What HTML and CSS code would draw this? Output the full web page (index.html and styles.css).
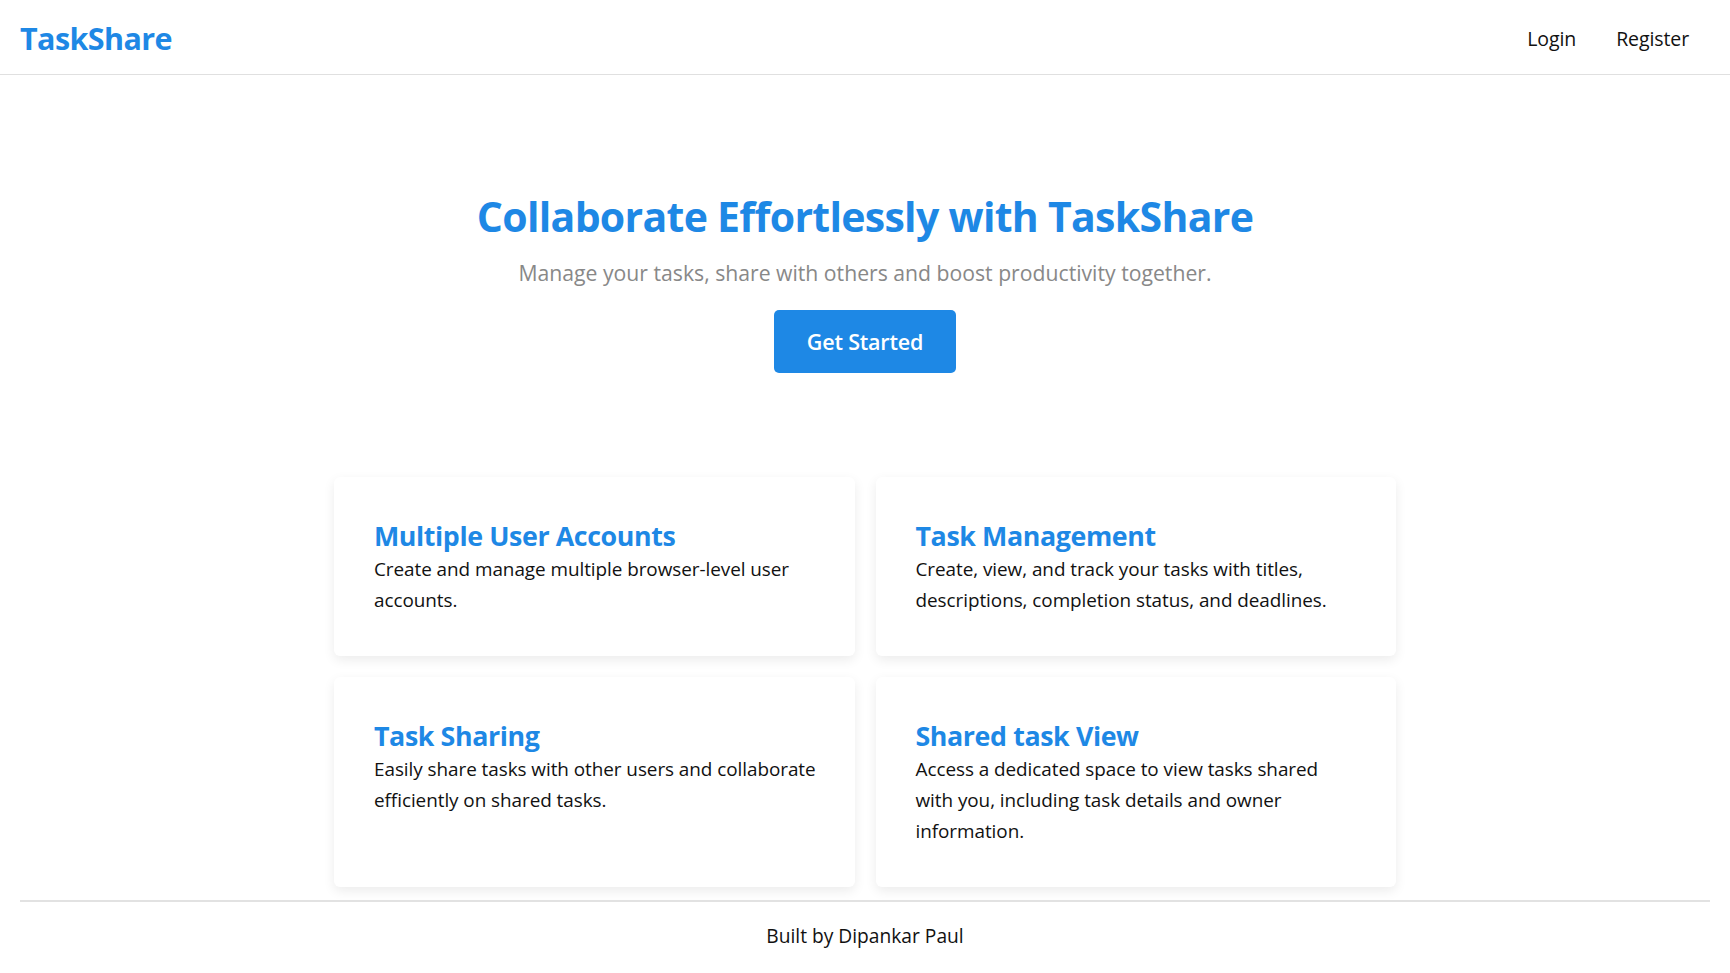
FILE: index.html
```html
<!DOCTYPE html>
<html lang="en">
<head>
<meta charset="utf-8">
<title>TaskShare</title>
<link rel="stylesheet" href="styles.css">
</head>
<body>
<header class="topbar">
  <a class="logo" href="#">TaskShare</a>
  <nav class="nav">
    <a href="#" class="nav-link">Login</a>
    <a href="#" class="nav-link">Register</a>
  </nav>
</header>
<main class="main">
  <section class="hero">
    <h1 class="hero-title">Collaborate Effortlessly with TaskShare</h1>
    <p class="hero-sub">Manage your tasks, share with others and boost productivity together.</p>
    <a href="#" class="btn">Get Started</a>
  </section>
  <section class="features">
    <div class="card">
      <h3 class="card-title">Multiple User Accounts</h3>
      <p class="card-text">Create and manage multiple browser-level user accounts.</p>
    </div>
    <div class="card">
      <h3 class="card-title">Task Management</h3>
      <p class="card-text">Create, view, and track your tasks with titles, descriptions, completion status, and deadlines.</p>
    </div>
    <div class="card">
      <h3 class="card-title">Task Sharing</h3>
      <p class="card-text">Easily share tasks with other users and collaborate efficiently on shared tasks.</p>
    </div>
    <div class="card">
      <h3 class="card-title">Shared task View</h3>
      <p class="card-text">Access a dedicated space to view tasks shared with&nbsp;you, including task details and owner information.</p>
    </div>
  </section>
</main>
<footer class="footer">
  <p class="footer-text">Built by Dipankar Paul</p>
</footer>
</body>
</html>
```

FILE: styles.css
```css
* { box-sizing: border-box; }
html, body { margin: 0; padding: 0; }
body {
  font-family: "Open Sans", "Noto Sans", sans-serif;
  color: #222;
  background: #fff;
}
a { text-decoration: none; }

.topbar {
  display: flex;
  align-items: center;
  justify-content: space-between;
  height: 75px;
  padding: 0 20px;
  border-bottom: 1px solid #e0e0e0;
}
.logo {
  color: #1e88e5;
  font-weight: 700;
  font-size: 30.5px;
  letter-spacing: -0.6px;
  margin-top: 2px;
}
.nav { display: flex; margin-top: 3px; }
.nav-link {
  color: #111;
  font-size: 19.5px;
  padding: 0 20px;
  letter-spacing: -0.1px;
}
.nav-link:last-child { padding-right: 21px; }

.main { display: flex; flex-direction: column; align-items: center; }
.hero { display: flex; flex-direction: column; align-items: center; }
.hero-title {
  margin: 115px 0 0;
  color: #1e88e5;
  font-size: 41px;
  font-weight: 700;
  line-height: 53px;
  letter-spacing: -0.7px;
}
.hero-sub {
  margin: 13px 0 0;
  color: #888;
  font-size: 21.2px;
  line-height: 34px;
  letter-spacing: 0;
}
.btn {
  margin-top: 20px;
  display: block;
  width: 182px;
  height: 63px;
  line-height: 63px;
  text-align: center;
  background: #1e88e5;
  color: #fff;
  border-radius: 5px;
  font-size: 21.5px;
  font-weight: 600;
  letter-spacing: -0.2px;
}

.features {
  margin-top: 104px;
  width: 1062px;
  display: grid;
  grid-template-columns: 1fr 1fr;
  gap: 21px;
}
.card {
  background: #fff;
  border-radius: 6px;
  box-shadow: 0 4px 12px rgba(0,0,0,0.08);
  padding: 40px 34px 40px 40px;
}
.card-title {
  margin: 0;
  color: #1e88e5;
  font-size: 26.8px;
  line-height: 37px;
  font-weight: 700;
  letter-spacing: -0.4px;
}
.card-text {
  margin: 0;
  font-size: 18.9px;
  line-height: 31px;
  color: #111;
  letter-spacing: -0.05px;
}

.footer {
  margin: 13px 20px 0;
  border-top: 2px solid #e2e2e2;
  padding: 18px 0;
  text-align: center;
}
.footer-text {
  margin: 0;
  font-size: 19.2px;
  line-height: 31px;
  color: #111;
}
```
